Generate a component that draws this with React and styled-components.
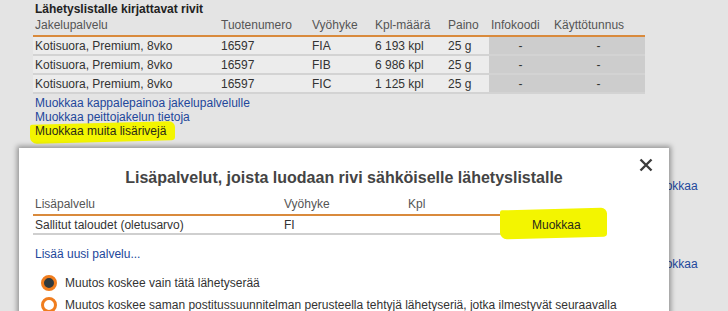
import React from "react"
import styled, { createGlobalStyle } from "styled-components"

const GlobalStyle = createGlobalStyle`
  html, body {
    margin: 0;
    padding: 0;
    background: #e4e4e4;
    font-family: "Liberation Sans", Arial, sans-serif;
    font-size: 12px;
    color: #333;
    overflow: hidden;
  }
`

const Page = styled.div`
  position: relative;
  width: 728px;
  height: 311px;
  padding: 2px 0 0 33px;
  box-sizing: border-box;
`

const SectionTitle = styled.h3`
  margin: 0 0 0 2px;
  font-size: 12px;
  line-height: 14px;
  font-weight: bold;
  color: #222;
`

const Table = styled.table`
  border-collapse: collapse;
  width: ${(p) => p.$width}px;

  th {
    text-align: left;
    font-weight: normal;
    color: #555;
    padding: 1px 2px 2px;
    height: 16px;
    border-bottom: 2px solid #d98a3c;
  }

  td {
    padding: 0 2px;
    height: 17px;
    border-bottom: 2px solid ${(p) => p.$line};
  }
`

const Cell = styled.td`
  background: ${(p) => (p.$dark ? "#cdcdcd" : p.$bg)};
  text-align: ${(p) => (p.$center ? "center" : "left")};
`

const Links = styled.div`
  display: flex;
  flex-direction: column;
  align-items: flex-start;
  padding: 2px 0 0 2px;
`

const Link = styled.a`
  position: relative;
  isolation: isolate;
  color: ${(p) => (p.$marked ? "#2a2a1a" : "#22479b")};
  line-height: 14px;
  text-decoration: none;
  cursor: pointer;
`

const Marker = styled.span`
  position: absolute;
  left: ${(p) => p.$left}px;
  right: ${(p) => p.$right}px;
  top: ${(p) => p.$top}px;
  bottom: ${(p) => p.$bottom}px;
  background: #f3f500;
  border-radius: 2px 6px 3px 7px;
  transform: skewY(-1.5deg);
  z-index: -1;
`

const BehindLinks = styled.div`
  display: flex;
  flex-direction: column;
  gap: 64px;
  padding: 41px 0 0 616px;
`

const Dialog = styled.div`
  position: absolute;
  left: 19px;
  top: 148px;
  width: 650px;
  height: 190px;
  background: #fff;
  box-shadow: 0 0 5px 2px rgba(0, 0, 0, 0.35);
  padding: 20px 14px 0 14px;
  box-sizing: border-box;
`

const DialogHeader = styled.div`
  display: flex;
  align-items: center;
  justify-content: center;
  position: relative;
`

const DialogTitle = styled.h2`
  margin: 0;
  font-size: 16px;
  line-height: 20px;
  font-weight: bold;
  color: #444;
`

const Close = styled.button`
  position: absolute;
  right: 1px;
  top: -11px;
  border: none;
  background: none;
  padding: 0;
  width: 16px;
  height: 16px;
  cursor: pointer;
`

const DialogBody = styled.div`
  padding-top: 7px;
`

const EditCell = styled.td`
  border-bottom: none !important;
  padding-left: 3px !important;
  position: relative;
`

const AddLink = styled.a`
  display: block;
  margin: 12px 0 0 2px;
  color: #22479b;
  line-height: 14px;
  text-decoration: none;
`

const RadioList = styled.div`
  display: flex;
  flex-direction: column;
  gap: 6px;
  margin-top: 14px;
  padding-left: 8px;
`

const RadioRow = styled.label`
  display: flex;
  align-items: center;
  gap: 8px;
  white-space: nowrap;
  color: #333;
  font-size: 12px;
  line-height: 14px;
`

const RadioDot = styled.span`
  width: 10px;
  height: 10px;
  border-radius: 50%;
  border: 3px solid #f07d1e;
  background: ${(p) => (p.$checked ? "#2f3a3f" : "#fff")};
  flex-shrink: 0;
`

const rows = [
  { name: "Kotisuora, Premium, 8vko", no: "16597", zone: "FIA", count: "6 193 kpl" },
  { name: "Kotisuora, Premium, 8vko", no: "16597", zone: "FIB", count: "6 986 kpl" },
  { name: "Kotisuora, Premium, 8vko", no: "16597", zone: "FIC", count: "1 125 kpl" },
]

export default function App() {
  return (
    <>
      <GlobalStyle />
      <Page>
        <SectionTitle>Lähetyslistalle kirjattavat rivit</SectionTitle>
        <Table $width={612} $line="#d3d3d3">
          <colgroup>
            <col style={{ width: 186 }} />
            <col style={{ width: 91 }} />
            <col style={{ width: 63 }} />
            <col style={{ width: 73 }} />
            <col style={{ width: 43 }} />
            <col style={{ width: 63 }} />
            <col />
          </colgroup>
          <thead>
            <tr>
              <th>Jakelupalvelu</th>
              <th>Tuotenumero</th>
              <th>Vyöhyke</th>
              <th>Kpl-määrä</th>
              <th>Paino</th>
              <th>Infokoodi</th>
              <th>Käyttötunnus</th>
            </tr>
          </thead>
          <tbody>
            {rows.map((r) => (
              <tr key={r.zone}>
                <Cell $bg="#ececec">{r.name}</Cell>
                <Cell $bg="#ececec">{r.no}</Cell>
                <Cell $bg="#ececec">{r.zone}</Cell>
                <Cell $bg="#ececec">{r.count}</Cell>
                <Cell $bg="#ececec">25 g</Cell>
                <Cell $dark $center>-</Cell>
                <Cell $dark $center>-</Cell>
              </tr>
            ))}
          </tbody>
        </Table>
        <Links>
          <Link>Muokkaa kappalepainoa jakelupalvelulle</Link>
          <Link>Muokkaa peittojakelun tietoja</Link>
          <Link $marked>
            <Marker $left={-5} $right={-9} $top={-1} $bottom={-4} />
            Muokkaa muita lisärivejä
          </Link>
        </Links>
        <BehindLinks>
          <Link>Muokkaa</Link>
          <Link>Muokkaa</Link>
        </BehindLinks>

        <Dialog>
          <DialogHeader>
            <DialogTitle>Lisäpalvelut, joista luodaan rivi sähköiselle lähetyslistalle</DialogTitle>
            <Close aria-label="Sulje">
              <svg width="16" height="16" viewBox="0 0 16 16">
                <path d="M2.5 2.5 L13.5 13.5 M13.5 2.5 L2.5 13.5" stroke="#3c3c3c" strokeWidth="2.4" />
              </svg>
            </Close>
          </DialogHeader>
          <DialogBody>
            <Table $width={600} $line="#cfcfcf">
              <colgroup>
                <col style={{ width: 249 }} />
                <col style={{ width: 124 }} />
                <col style={{ width: 123 }} />
                <col />
              </colgroup>
              <thead>
                <tr>
                  <th>Lisäpalvelu</th>
                  <th>Vyöhyke</th>
                  <th>Kpl</th>
                  <EditCell as="th" />
                </tr>
              </thead>
              <tbody>
                <tr>
                  <Cell $bg="#fff">Sallitut taloudet (oletusarvo)</Cell>
                  <Cell $bg="#fff">FI</Cell>
                  <Cell $bg="#fff"></Cell>
                  <EditCell>
                    <Link $marked>
                      <Marker $left={-32} $right={-26} $top={-9} $bottom={-6} />
                      Muokkaa
                    </Link>
                  </EditCell>
                </tr>
              </tbody>
            </Table>
            <AddLink>Lisää uusi palvelu...</AddLink>
            <RadioList>
              <RadioRow>
                <RadioDot $checked />
                Muutos koskee vain tätä lähetyserää
              </RadioRow>
              <RadioRow>
                <RadioDot />
                Muutos koskee saman postitussuunnitelman perusteella tehtyjä lähetyseriä, jotka ilmestyvät seuraavalla
              </RadioRow>
            </RadioList>
          </DialogBody>
        </Dialog>
      </Page>
    </>
  )
}
